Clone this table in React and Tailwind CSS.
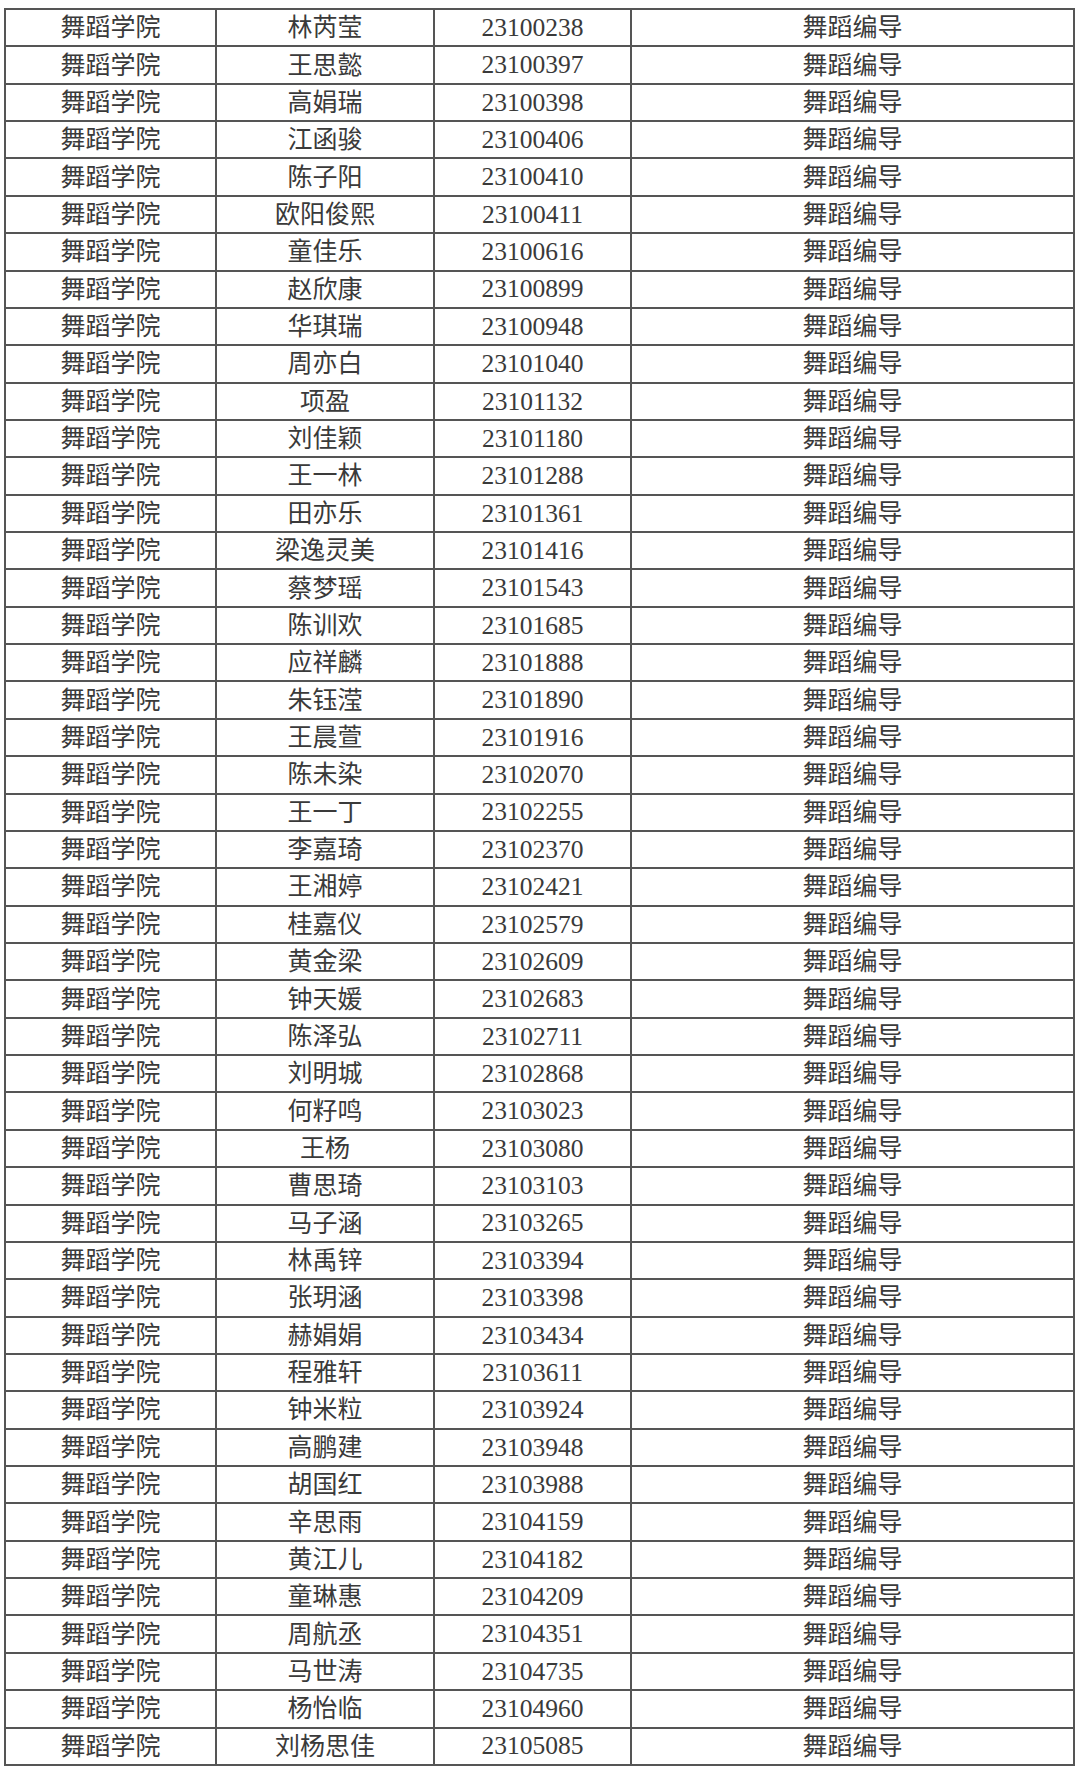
import React from "react";

const rows = [
  ["林芮莹", "23100238"],
  ["王思懿", "23100397"],
  ["高娟瑞", "23100398"],
  ["江函骏", "23100406"],
  ["陈子阳", "23100410"],
  ["欧阳俊熙", "23100411"],
  ["童佳乐", "23100616"],
  ["赵欣康", "23100899"],
  ["华琪瑞", "23100948"],
  ["周亦白", "23101040"],
  ["项盈", "23101132"],
  ["刘佳颖", "23101180"],
  ["王一林", "23101288"],
  ["田亦乐", "23101361"],
  ["梁逸灵美", "23101416"],
  ["蔡梦瑶", "23101543"],
  ["陈训欢", "23101685"],
  ["应祥麟", "23101888"],
  ["朱钰滢", "23101890"],
  ["王晨萱", "23101916"],
  ["陈未染", "23102070"],
  ["王一丁", "23102255"],
  ["李嘉琦", "23102370"],
  ["王湘婷", "23102421"],
  ["桂嘉仪", "23102579"],
  ["黄金梁", "23102609"],
  ["钟天媛", "23102683"],
  ["陈泽弘", "23102711"],
  ["刘明城", "23102868"],
  ["何籽鸣", "23103023"],
  ["王杨", "23103080"],
  ["曹思琦", "23103103"],
  ["马子涵", "23103265"],
  ["林禹锌", "23103394"],
  ["张玥涵", "23103398"],
  ["赫娟娟", "23103434"],
  ["程雅轩", "23103611"],
  ["钟米粒", "23103924"],
  ["高鹏建", "23103948"],
  ["胡国红", "23103988"],
  ["辛思雨", "23104159"],
  ["黄江儿", "23104182"],
  ["童琳惠", "23104209"],
  ["周航丞", "23104351"],
  ["马世涛", "23104735"],
  ["杨怡临", "23104960"],
  ["刘杨思佳", "23105085"],
];

const font = {
  fontFamily: '"Liberation Serif", "Noto Sans CJK SC", serif',
};

export default function App() {
  return (
    <div className="w-[1080px] h-[1772px] bg-white pt-[8px] pl-[4px]">
      <table
        className="w-[1071px] border-collapse text-[25px] text-[#3a3a3a] font-normal"
        style={font}
      >
        <tbody>
          {rows.map(([name, id]) => (
            <tr key={id} className="h-[37.36px]">
              <td className="w-[211px] border-2 border-[#555] p-0 text-center leading-none">舞蹈学院</td>
              <td className="w-[218px] border-2 border-[#555] p-0 text-center leading-none">{name}</td>
              <td className="w-[197px] border-2 border-[#555] p-0 text-center leading-none text-[25.5px]">{id}</td>
              <td className="border-2 border-[#555] p-0 text-center leading-none">舞蹈编导</td>
            </tr>
          ))}
        </tbody>
      </table>
    </div>
  );
}
